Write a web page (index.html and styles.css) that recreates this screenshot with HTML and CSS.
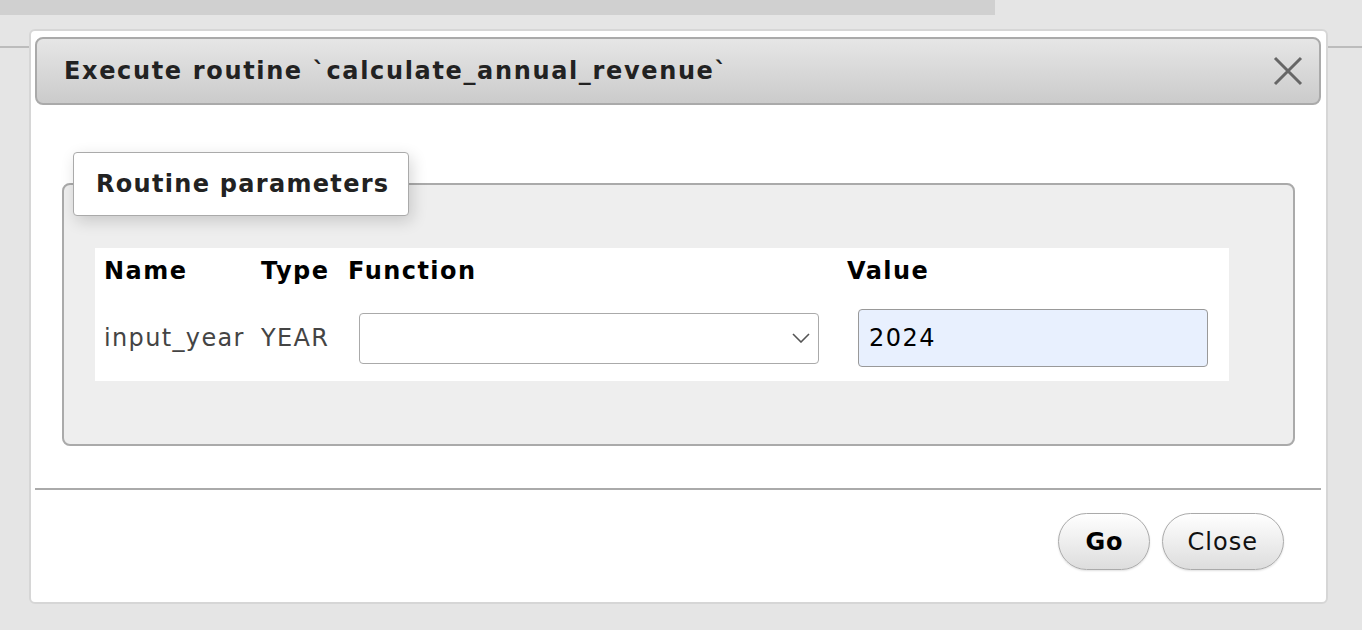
FILE: index.html
```html
<!DOCTYPE html>
<html lang="en">
<head>
<meta charset="utf-8">
<title>Execute routine</title>
<link rel="stylesheet" href="styles.css">
</head>
<body>
<div class="page">
  <div class="topstrip"></div>
  <div class="backline"></div>
</div>

<div class="dialog">
  <div class="titlebar">
    <span class="title">Execute routine `calculate_annual_revenue`</span>
    <svg class="close-x" width="30" height="30" viewBox="0 0 30 30">
      <path d="M2 2 L28 28 M28 2 L2 28" stroke="#666" stroke-width="3" fill="none"/>
    </svg>
  </div>

  <div class="content">
    <fieldset class="params">
      <legend class="legend">Routine parameters</legend>
      <table class="ptable">
        <colgroup>
          <col class="c-name"><col class="c-type"><col class="c-func"><col class="c-val">
        </colgroup>
        <tr class="head">
          <th>Name</th><th>Type</th><th>Function</th><th>Value</th>
        </tr>
        <tr class="row">
          <td>input_year</td>
          <td>YEAR</td>
          <td>
            <div class="select">
              <svg width="18" height="10" viewBox="0 0 18 10">
                <polyline points="1,1 9,9 17,1" fill="none" stroke="#555" stroke-width="1.6"/>
              </svg>
            </div>
          </td>
          <td><div class="input">2024</div></td>
        </tr>
      </table>
    </fieldset>
  </div>

  <div class="buttonpane">
    <button class="btn btn-go">Go</button>
    <button class="btn">Close</button>
  </div>
</div>
</body>
</html>
```

FILE: styles.css
```css
html, body {
  margin: 0;
  padding: 0;
}

body {
  background: #e5e5e5;
  font-family: "DejaVu Sans", Verdana, sans-serif;
  width: 1362px;
  height: 630px;
  overflow: hidden;
}

.topstrip {
  width: 995px;
  height: 15px;
  background: #d0d0d0;
}

.backline {
  margin-top: 31px;
  height: 2px;
  background: #bcbcbc;
}

.dialog {
  position: absolute;
  left: 29px;
  top: 29px;
  width: 1299px;
  box-sizing: border-box;
  background: #fff;
  border: 2px solid #d6d6d6;
  border-radius: 6px;
  padding: 6px 5px 0 4px;
}

.titlebar {
  height: 68px;
  box-sizing: border-box;
  border: 2px solid #aaa;
  border-radius: 8px;
  background: linear-gradient(#e6e6e6, #cbcbcb);
  display: flex;
  align-items: center;
  justify-content: space-between;
  padding: 0 16px 0 27px;
}

.title {
  font-size: 24px;
  font-weight: bold;
  color: #222;
  letter-spacing: 1.65px;
}

.close-x {
  display: block;
}

.content {
  padding: 47px 26px 0 27px;
}

.params {
  margin: 0;
  padding: 32px 63px 63px 9px;
  border: 2px solid #aaa;
  border-radius: 8px;
  background: #eee;
}

.legend {
  padding: 0 19px 0 22px;
  height: 62px;
  line-height: 62px;
  background: #fff;
  border: 1px solid #aaa;
  border-radius: 4px;
  box-shadow: 3px 5px 16px rgba(0, 0, 0, 0.16);
  font-size: 24px;
  font-weight: bold;
  color: #222;
  letter-spacing: 1.3px;
}

.ptable {
  margin-left: 22px;
  background: #fff;
  border-collapse: collapse;
  table-layout: fixed;
  width: 1134px;
  font-size: 24px;
}

.c-name { width: 157px; }
.c-type { width: 87px; }
.c-func { width: 499px; }
.c-val { width: 391px; }

.ptable th,
.ptable td {
  padding: 0 9px;
  text-align: left;
  vertical-align: middle;
  white-space: nowrap;
}

.ptable th {
  color: #000;
  font-weight: bold;
  letter-spacing: 1.45px;
}

.ptable td {
  color: #444;
  letter-spacing: 1.35px;
}

.head {
  height: 45px;
}

.row {
  height: 88px;
}

.row td {
  padding-top: 2px;
}

.select {
  margin-left: 11px;
  width: 460px;
  height: 51px;
  box-sizing: border-box;
  border: 1px solid #aaa;
  border-radius: 4px;
  background: #fff;
  display: flex;
  align-items: center;
  justify-content: flex-end;
  padding-right: 8px;
}

.select svg {
  display: block;
}

.input {
  margin-left: 11px;
  width: 350px;
  height: 58px;
  box-sizing: border-box;
  border: 1px solid #999;
  border-radius: 4px;
  background: #e8f0fe;
  color: #000;
  display: flex;
  align-items: center;
  padding-left: 10px;
  letter-spacing: 1.5px;
}

.buttonpane {
  margin-top: 42px;
  border-top: 2px solid #aaa;
  display: flex;
  justify-content: flex-end;
  gap: 12px;
  padding: 23px 37px 32px 0;
}

.btn {
  height: 57px;
  box-sizing: border-box;
  padding: 0 25px;
  border: 1px solid #aaa;
  border-radius: 29px;
  background: linear-gradient(#fff, #ddd);
  box-shadow: 0 1px 2px rgba(0, 0, 0, 0.12);
  font-family: "DejaVu Sans", Verdana, sans-serif;
  font-size: 24px;
  color: #111;
  letter-spacing: 1px;
}

.btn-go {
  font-weight: bold;
  color: #000;
  padding: 0 25px 0 26px;
}
```
